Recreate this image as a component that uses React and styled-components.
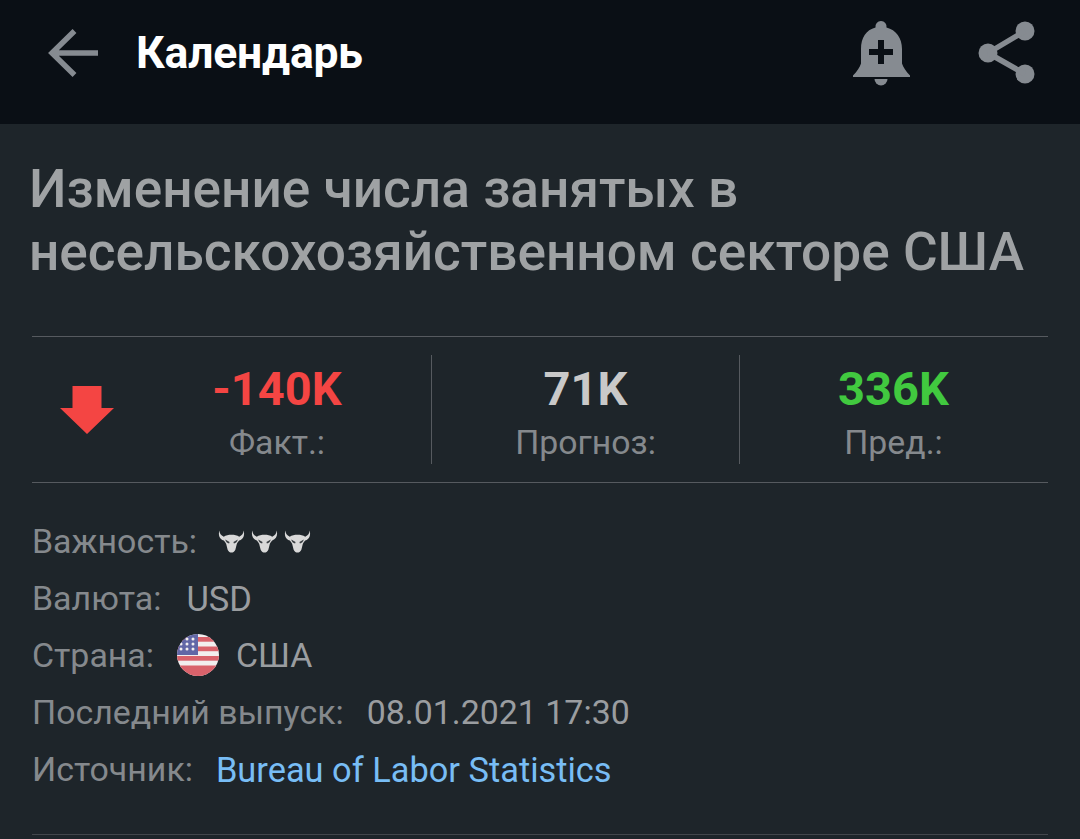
import React from "react";
import styled, { createGlobalStyle } from "styled-components";

const Global = createGlobalStyle`
  html, body { margin: 0; padding: 0; background: #1e252a; }
  body { font-family: Roboto, "Liberation Sans", sans-serif; }
`;

const Page = styled.div`
  width: 1080px;
  height: 839px;
  overflow: hidden;
  background: #1e252a;
  display: flex;
  flex-direction: column;
`;

const Toolbar = styled.header`
  height: 124px;
  flex: none;
  box-sizing: border-box;
  background: #0a0f15;
  display: flex;
  align-items: center;
  padding: 0 44px 18px 48px;
`;

const IconSlot = styled.span`
  display: flex;
  flex: none;
  color: #868b91;
  margin-left: ${(p) => p.$gap || 0}px;
`;

const ToolbarTitle = styled.h1`
  margin: 0 0 0 38px;
  flex: 1;
  font-size: 44.5px;
  font-weight: 700;
  color: #ffffff;
  letter-spacing: -0.2px;
`;

const Content = styled.main`
  flex: 1;
  padding: 0 32px;
  display: flex;
  flex-direction: column;
`;

const Headline = styled.h2`
  margin: 34px 0 0 -3px;
  font-size: 53.2px;
  line-height: 63px;
  font-weight: 500;
  color: #9fa2a4;
`;

const Stats = styled.section`
  margin-top: 52px;
  height: 147px;
  box-sizing: border-box;
  border-top: 1px solid #565a5f;
  border-bottom: 1px solid #565a5f;
  display: grid;
  grid-template-columns: 91px repeat(3, 308px);
  align-items: center;
`;

const ArrowCell = styled.div`
  display: flex;
  justify-content: center;
  padding: 0 0 0 19px;
`;

const Stat = styled.div`
  height: 109px;
  display: flex;
  flex-direction: column;
  align-items: center;
  border-left: ${(p) => (p.$divided ? "1px solid #565a5f" : "none")};
`;

const StatValue = styled.div`
  font-size: 47px;
  line-height: 54px;
  font-weight: 700;
  color: ${(p) => p.$color};
  margin-top: 7px;
`;

const StatLabel = styled.div`
  font-size: 33.8px;
  line-height: 40px;
  color: #85898d;
  margin-top: 7px;
`;

const Details = styled.dl`
  margin: 30px 0 0;
  display: flex;
  flex-direction: column;
  border-bottom: 1px solid #43474c;
  padding-bottom: 36px;
`;

const Row = styled.div`
  height: 57px;
  display: flex;
  align-items: center;
  font-size: 33.9px;
`;

const Term = styled.dt`
  color: #85898d;
`;

const Value = styled.dd`
  margin: 0 0 0 ${(p) => p.$gap || 23}px;
  color: ${(p) => p.$color || "#9a9da0"};
  font-size: ${(p) => p.$size || 33.9}px;
  display: flex;
  align-items: center;
`;

const Flag = styled.svg`
  margin: 0 17px 2px 0;
`;

const Back = () => (
  <svg width="50" height="50" viewBox="0 0 50 50" fill="none" stroke="currentColor" strokeWidth="5.5">
    <path d="M50 25H4M26.500 3 4 25l22.500 22" />
  </svg>
);

const Bell = () => (
  <svg width="58" height="66" viewBox="0 0 58 66">
    <path
      fill="currentColor"
      fillRule="evenodd"
      d="M29 1a5.500 5.500 0 0 1 5.500 6.500C44 10 50 18 50 29v14.500c1 3.500 4 8 8 12V57H1v-1.500c4-4 7-8.500 8-12V29C9 18 14 10 23.500 7.500A5.500 5.500 0 0 1 29 1ZM26 20v9H17v6h9v9h6v-9h9v-6h-9v-9Z"
    />
    <path fill="currentColor" d="M22.500 59h13a6.500 6.500 0 0 1-13 0Z" />
  </svg>
);

const Share = () => (
  <svg width="58" height="64" viewBox="0 0 58 64" fill="currentColor">
    <circle cx="47" cy="10" r="9.500" />
    <circle cx="10" cy="32" r="9.500" />
    <circle cx="47" cy="53" r="9.500" />
    <path d="M10 32 47 10M10 32l37 21" stroke="currentColor" strokeWidth="5.500" fill="none" />
  </svg>
);

const DownArrow = () => (
  <svg width="54" height="48" viewBox="0 0 54 48">
    <path fill="#f44543" d="M12.500 0h29v22H54L27 48 0 22h12.500Z" />
  </svg>
);

const Bull = () => (
  <svg width="27" height="24" viewBox="0 0 28 24">
    <path
      fill="#d9d9d9"
      d="M1.500 1c0 3 1.500 5 4.500 6.500C8 6 11 5.500 14 5.500s6 .5 8 2C25 6 26.500 4 26.500 1c1.500 4.500 0 9-4.500 10.500-1 1-1.500 2-2.500 3.500L18 21c-1 2-2.500 3-4 3s-3-1-4-3l-1.500-6C7.500 13.500 7 12.500 6 11.500 1.500 10 0 5.500 1.500 1Z"
    />
    <path fill="#3a3f43" d="M7.500 10.500l4.500 2.500-.5 1.500c-2 0-3.500-1.500-4-4ZM20.500 10.500L16 13l.5 1.500c2 0 3.500-1.500 4-4Z" />
  </svg>
);

const Bulls = styled.span`
  display: flex;
  gap: 6px;
  margin-top: -1px;
`;

const UsFlag = () => (
  <Flag width="42" height="42" viewBox="0 0 42 42">
    <defs>
      <clipPath id="flagDisc">
        <circle cx="21" cy="21" r="21" />
      </clipPath>
    </defs>
    <g clipPath="url(#flagDisc)">
      <rect width="42" height="42" fill="#f2eeee" />
      {[3, 12.500, 22, 31.500].map((y) => (
        <rect key={y} y={y} width="42" height={y > 30 ? 10.500 : 4.700} fill="#d9626b" />
      ))}
      <rect width="21" height="21" fill="#6267a6" />
      {[5, 10, 15].map((y) =>
        [4, 10, 16].map((x) => <circle key={`${x}-${y}`} cx={x} cy={y} r="1.500" fill="#f2eeee" />)
      )}
    </g>
  </Flag>
);

export default function App() {
  return (
    <Page>
      <Global />
      <Toolbar>
        <IconSlot>
          <Back />
        </IconSlot>
        <ToolbarTitle>Календарь</ToolbarTitle>
        <IconSlot>
          <Bell />
        </IconSlot>
        <IconSlot $gap={68}>
          <Share />
        </IconSlot>
      </Toolbar>
      <Content>
        <Headline>
          Изменение числа занятых в
          <br />
          несельскохозяйственном секторе США
        </Headline>
        <Stats>
          <ArrowCell>
            <DownArrow />
          </ArrowCell>
          <Stat>
            <StatValue $color="#f44543">-140K</StatValue>
            <StatLabel>Факт.:</StatLabel>
          </Stat>
          <Stat $divided>
            <StatValue $color="#c9c9c9">71K</StatValue>
            <StatLabel>Прогноз:</StatLabel>
          </Stat>
          <Stat $divided>
            <StatValue $color="#41c93f">336K</StatValue>
            <StatLabel>Пред.:</StatLabel>
          </Stat>
        </Stats>
        <Details>
          <Row>
            <Term>Важность:</Term>
            <Value $gap={21}>
              <Bulls>
                <Bull />
                <Bull />
                <Bull />
              </Bulls>
            </Value>
          </Row>
          <Row>
            <Term>Валюта:</Term>
            <Value $gap={25} $size={34.5}>USD</Value>
          </Row>
          <Row>
            <Term>Страна:</Term>
            <Value>
              <UsFlag />
              США
            </Value>
          </Row>
          <Row>
            <Term>Последний выпуск:</Term>
            <Value>08.01.2021 17:30</Value>
          </Row>
          <Row>
            <Term>Источник:</Term>
            <Value $color="#78bdf5" $size={34.4}>Bureau of Labor Statistics</Value>
          </Row>
        </Details>
      </Content>
    </Page>
  );
}
